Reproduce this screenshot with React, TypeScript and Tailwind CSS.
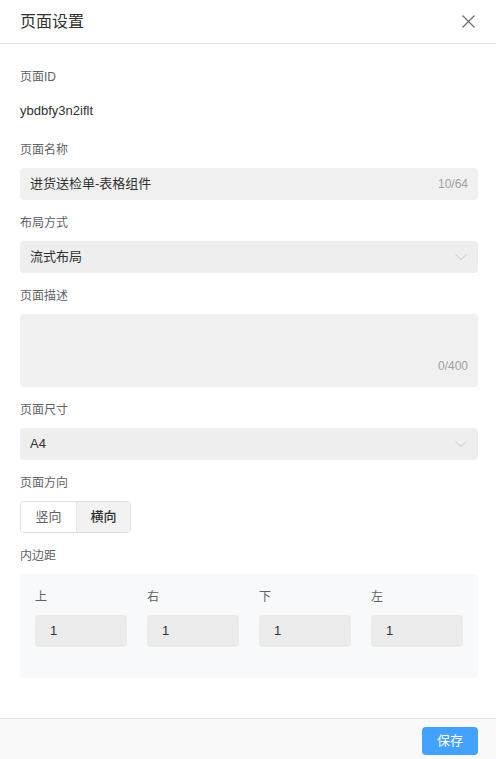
import React, { useState } from 'react';

const FONT = "font-['Liberation_Sans','Noto_Sans_CJK_SC',sans-serif]";

function Label({ children }: { children: React.ReactNode }) {
    return <div className="h-5 leading-5 mb-2 text-[12px] text-[#606266]">{children}</div>;
}

function Chevron() {
    return (
        <svg width="14" height="14" viewBox="0 0 14 14" fill="none">
            <polyline points="1.5,4.5 7,9.5 12.5,4.5" stroke="#c8cbd1" strokeWidth="1" />
        </svg>
    );
}

function SelectBox({ value }: { value: string }) {
    return (
        <div className="h-8 rounded bg-[#eeeeee] flex items-center justify-between pl-[10px] pr-[10px] text-[13px] text-[#303133]">
            <span>{value}</span>
            <Chevron />
        </div>
    );
}

export default function App() {
    const [orientation, setOrientation] = useState<'portrait' | 'landscape'>('landscape');
    const sides = ['上', '右', '下', '左'];

    return (
        <div className={`${FONT} w-[496px] h-[759px] overflow-hidden bg-white flex flex-col`}>
            {/* Header */}
            <div className="h-[44px] shrink-0 border-b border-[#e4e4e4] flex items-center justify-between pl-5 pr-[21px]">
                <span className="text-[16px] text-[#303133]">页面设置</span>
                <svg width="13" height="13" viewBox="0 0 13 13" fill="none">
                    <path d="M0.5 0.5L12.5 12.5M12.5 0.5L0.5 12.5" stroke="#666" strokeWidth="1.1" />
                </svg>
            </div>

            {/* Body */}
            <div className="h-[674px] shrink-0 pl-5 pr-[18px] pt-[23px]">
                <Label>页面ID</Label>
                <div className="h-8 leading-8 text-[13px] text-[#303133]">ybdbfy3n2iflt</div>

                <div className="mt-[13px]">
                    <Label>页面名称</Label>
                    <div className="h-8 rounded bg-[#f0f0f0] flex items-center justify-between px-[10px]">
                        <span className="text-[13px] text-[#303133]">进货送检单-表格组件</span>
                        <span className="text-[12px] text-[#a0a0a0]">10/64</span>
                    </div>
                </div>

                <div className="mt-[13px]">
                    <Label>布局方式</Label>
                    <SelectBox value="流式布局" />
                </div>

                <div className="mt-[13px]">
                    <Label>页面描述</Label>
                    <div className="h-[73px] rounded bg-[#f0f0f0] flex items-end justify-end px-[10px] pb-[12px]">
                        <span className="text-[12px] text-[#a0a0a0]">0/400</span>
                    </div>
                </div>

                <div className="mt-[13px]">
                    <Label>页面尺寸</Label>
                    <SelectBox value="A4" />
                </div>

                <div className="mt-[13px]">
                    <Label>页面方向</Label>
                    <div className="inline-flex h-8 rounded border border-[#dcdfe6] overflow-hidden text-[13px]">
                        <button
                            onClick={() => setOrientation('portrait')}
                            className={`w-[55px] h-full ${orientation === 'portrait' ? 'bg-[#f2f2f2] text-[#303133] font-medium' : 'bg-white text-[#606266]'}`}
                        >
                            竖向
                        </button>
                        <button
                            onClick={() => setOrientation('landscape')}
                            className={`w-[54px] h-full border-l border-[#e4e4e4] ${orientation === 'landscape' ? 'bg-[#f2f2f2] text-[#303133] font-medium' : 'bg-white text-[#606266]'}`}
                        >
                            横向
                        </button>
                    </div>
                </div>

                <div className="mt-[13px]">
                    <Label>内边距</Label>
                    <div className="rounded bg-[#f8f9fa] px-[15px] pt-[13px] pb-[31px] grid grid-cols-4 gap-x-5">
                        {sides.map((s) => (
                            <div key={s}>
                                <Label>{s}</Label>
                                <div className="h-8 rounded bg-[#ebebeb] flex items-center px-[15px] text-[13px] text-[#303133]">1</div>
                            </div>
                        ))}
                    </div>
                </div>
            </div>

            {/* Footer */}
            <div className="flex-1 border-t border-[#e2e2e2] bg-[#f9f9f9] flex justify-end items-start pt-2 pr-[18px]">
                <button className="w-[56px] h-[28px] rounded bg-[#43a1ff] text-white text-[13px]">保存</button>
            </div>
        </div>
    );
}
